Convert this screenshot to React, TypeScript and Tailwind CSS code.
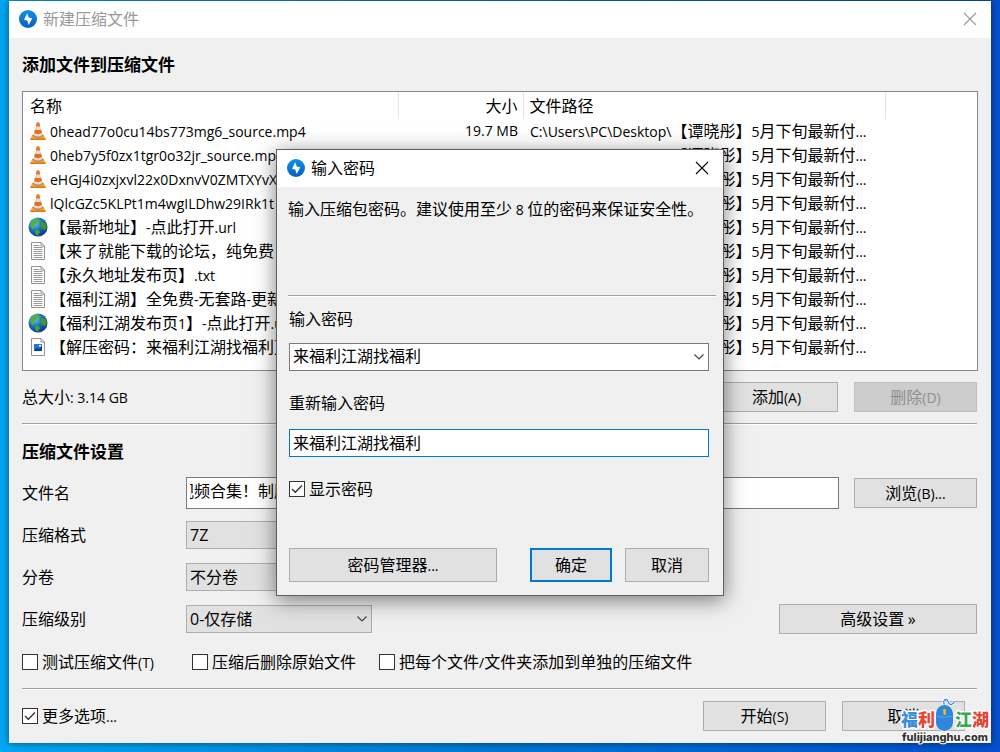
import { useState, type ReactNode } from "react";

type FileKind = "video" | "url" | "text" | "image";

interface FileItem {
  kind: FileKind;
  name: string;
  size?: string;
}

const files: FileItem[] = [
  { kind: "video", name: "0head77o0cu14bs773mg6_source.mp4", size: "19.7 MB" },
  { kind: "video", name: "0heb7y5f0zx1tgr0o32jr_source.mp4" },
  { kind: "video", name: "eHGJ4i0zxjxvl22x0DxnvV0ZMTXYvX" },
  { kind: "video", name: "lQlcGZc5KLPt1m4wgILDhw29IRk1t" },
  { kind: "url", name: "【最新地址】-点此打开.url" },
  { kind: "text", name: "【来了就能下载的论坛，纯免费" },
  { kind: "text", name: "【永久地址发布页】.txt" },
  { kind: "text", name: "【福利江湖】全免费-无套路-更新" },
  { kind: "url", name: "【福利江湖发布页1】-点此打开.url" },
  { kind: "image", name: "【解压密码：来福利江湖找福利】" },
];

const filePath = "C:\\Users\\PC\\Desktop\\【谭晓彤】5月下旬最新付...";

// Latin runs are set smaller so they sit well next to the Chinese glyphs
function Mixed({ text }: { text: string }) {
  return (
    <>
      {text.split(/([\x20-\x7e]+)/).map((part, i) =>
        i % 2 === 1 ? (
          <span key={i} className="text-[14px] leading-none">{part}</span>
        ) : (
          part
        )
      )}
    </>
  );
}

function AppLogo() {
  return (
    <svg width="18" height="18" viewBox="0 0 18 18" className="shrink-0">
      <defs>
        <linearGradient id="logo" x1="0" y1="0" x2="0" y2="1">
          <stop offset="0" stopColor="#0f93e6" />
          <stop offset="1" stopColor="#0a5cc4" />
        </linearGradient>
      </defs>
      <circle cx="9" cy="9" r="9" fill="url(#logo)" />
      <path d="M8.2 3.2 L5 9.8 L8.3 10.4 L9.6 15 L13.3 8.2 L9.8 7.6 Z" fill="#fff" />
    </svg>
  );
}

function CloseIcon() {
  return (
    <svg width="14" height="14" viewBox="0 0 14 14" fill="none" stroke="currentColor" strokeWidth="1.1">
      <path d="M1 1 L13 13 M13 1 L1 13" />
    </svg>
  );
}

function FileIcon({ kind }: { kind: FileKind }) {
  if (kind === "video") {
    return (
      <svg width="16" height="18" viewBox="0 0 16 18" className="mx-auto">
        <path d="M2.2 12.4 H13.8 L15.8 18 H0.2 Z" fill="#f7a03c" />
        <path d="M0.6 16.6 H15.4 L15.9 18 H0.1 Z" fill="#e8730c" />
        <path d="M6.8 0.6 Q8 -0.2 9.2 0.6 L12.6 13.4 Q8 16.4 3.4 13.4 Z" fill="#dcd8d5" />
        <path d="M6.8 0.6 Q8 -0.2 9.2 0.6 L10.2 4.2 Q8 5 5.8 4.2 Z" fill="#e9741a" />
        <path d="M5 7.4 Q8 8.8 11 7.4 L12 11 Q8 13 4 11 Z" fill="#e66f14" />
        <path d="M3.2 13.4 Q8 17 12.8 13.4" stroke="#8d7a6a" strokeWidth="0.9" fill="none" />
      </svg>
    );
  }
  if (kind === "url") {
    return (
      <svg width="20" height="20" viewBox="0 0 20 20" className="mx-auto">
        <defs>
          <radialGradient id="globe" cx="0.35" cy="0.3" r="0.75">
            <stop offset="0" stopColor="#7cc4f5" />
            <stop offset="0.45" stopColor="#2273cf" />
            <stop offset="1" stopColor="#0a2f86" />
          </radialGradient>
        </defs>
        <circle cx="10" cy="10" r="9.5" fill="url(#globe)" />
        <path d="M3 4.5 Q6 0.8 10.5 1 L11.5 3 L9 5 L8.4 7.5 L6 8 L7 10.5 L5 12.5 L2.2 9.5 Z" fill="#4bb53b" />
        <path d="M12.6 4 Q16 3.4 18 6.8 L19 10.5 L16.8 13.5 L14.4 12 L12 9.6 L12.4 6.5 Z" fill="#35992f" />
        <path d="M6.8 13 L10 12.6 L12 15 L10 18.6 L7.6 17.6 Z" fill="#3da635" />
      </svg>
    );
  }
  return (
    <svg width="14" height="18" viewBox="0 0 14 18" fill="none" className="mx-auto">
      <path d="M0.5 0.5 H10 L13.5 4 V17.5 H0.5 Z" fill="#fdfdfd" stroke="#929292" />
      <path d="M10 0.5 V4 H13.5" stroke="#929292" />
      {kind === "text" ? (
        <path d="M2.5 3.5 H8.5 M2.5 5.5 H11.5 M2.5 7.5 H11.5 M2.5 9.5 H11.5 M2.5 11.5 H11.5 M2.5 13.5 H11.5 M2.5 15.5 H11.5" stroke="#9c9c9c" />
      ) : (
        <>
          <rect x="3" y="6" width="8" height="7" fill="#1f7bd8" />
          <path d="M3 13 L6 9.5 L8 11 L11 8.5 V13 Z" fill="#0b3f8c" />
          <circle cx="9" cy="7.8" r="1" fill="#fff" />
        </>
      )}
    </svg>
  );
}

function Button({ children, className = "" }: { children: string; className?: string }) {
  return (
    <button type="button" className={`border text-center ${className}`}>
      <Mixed text={children} />
    </button>
  );
}

function Checkbox({ label, defaultChecked = false }: { label: string; defaultChecked?: boolean }) {
  return (
    <label className="flex items-center gap-1 whitespace-nowrap">
      <span className="grid shrink-0">
        <input
          type="checkbox"
          defaultChecked={defaultChecked}
          className="peer col-start-1 row-start-1 size-4 appearance-none border border-[#333] bg-white"
        />
        <svg
          viewBox="0 0 16 16"
          className="pointer-events-none invisible col-start-1 row-start-1 size-4 peer-checked:visible"
          fill="none"
          stroke="#333"
          strokeWidth="1.4"
        >
          <path d="M3 8 L6.3 11.3 L13 4.6" />
        </svg>
      </span>
      <span><Mixed text={label} /></span>
    </label>
  );
}

function Select({ id, options, className }: { id: string; options: string[]; className: string }) {
  return (
    <div className="grid items-center">
      <select id={id} className={`col-start-1 row-start-1 h-7 w-full appearance-none border pl-[3px] pr-6 ${className}`}>
        {options.map((option) => (
          <option key={option}>{option}</option>
        ))}
      </select>
      <svg width="10" height="6" viewBox="0 0 10 6" fill="none" stroke="#444" strokeWidth="1.2" className="pointer-events-none col-start-1 row-start-1 mr-[5px] justify-self-end">
        <path d="M0.5 0.5 L5 5 L9.5 0.5" />
      </svg>
    </div>
  );
}

function Divider({ className = "" }: { className?: string }) {
  return <hr className={`h-[2px] border-t border-b border-t-[#a0a0a0] border-b-white ${className}`} />;
}

function Field({ id, label, children }: { id: string; label: string; children: ReactNode }) {
  return (
    <div className="flex h-8 items-center">
      <label htmlFor={id} className="w-[164px] shrink-0">{label}</label>
      {children}
    </div>
  );
}

const grayButton = "border-[#adadad] bg-[#e1e1e1]";

function FileTable() {
  return (
    <div className="mt-[14px] -mr-px h-[280px] overflow-hidden border border-[#828790] bg-white">
      <table className="w-full table-fixed border-collapse whitespace-nowrap">
        <colgroup>
          <col className="w-[375px]" />
          <col className="w-[125px]" />
          <col className="w-[362px]" />
          <col />
        </colgroup>
        <thead>
          <tr className="h-[27px]">
            <th className="border-r border-[#e5e5e5] pl-[7px] text-left font-normal">名称</th>
            <th className="border-r border-[#e5e5e5] pr-[5px] text-right font-normal">大小</th>
            <th className="border-r border-[#e5e5e5] pl-[6px] text-left font-normal">文件路径</th>
            <th />
          </tr>
        </thead>
        <tbody>
          {files.map((file) => (
            <tr key={file.name} className="h-6">
              <td className="overflow-hidden p-0">
                <div className="flex items-center gap-[2px] pl-1">
                  <span className="w-[21px] shrink-0"><FileIcon kind={file.kind} /></span>
                  <span><Mixed text={file.name} /></span>
                </div>
              </td>
              <td className="p-0 pr-[5px] text-right text-[14px]">{file.size}</td>
              <td className="p-0 pl-[7px]"><Mixed text={filePath} /></td>
              <td />
            </tr>
          ))}
        </tbody>
      </table>
    </div>
  );
}

function PasswordDialog() {
  const [password, setPassword] = useState("来福利江湖找福利");

  return (
    <div
      role="dialog"
      aria-labelledby="dialog-title"
      className="absolute inset-x-0 top-[149px] mx-auto w-[448px] border border-[#5f6062] bg-[#f0f0f0] shadow-[0_4px_20px_rgba(0,0,0,0.5)]"
    >
      <div className="flex h-[37px] items-center gap-[6px] bg-white pr-[14px] pb-[2px] pl-[10px]">
        <AppLogo />
        <h2 id="dialog-title" className="flex-1">输入密码</h2>
        <button type="button" aria-label="关闭"><CloseIcon /></button>
      </div>
      <p className="mt-[10px] h-[98px] pl-[11px] whitespace-nowrap">
        <Mixed text="输入压缩包密码。建议使用至少 8 位的密码来保证安全性。" />
      </p>
      <Divider className="mr-[7px] ml-[11px]" />
      <div className="px-[12px] pr-[14px]">
        <label htmlFor="password" className="mt-[10px] mb-[12px] block">输入密码</label>
        <Select id="password" options={["来福利江湖找福利"]} className="border-[#7a7a7a] bg-white pb-[2px]" />
        <label htmlFor="password-again" className="mt-[20px] mb-[14px] block">重新输入密码</label>
        <input
          id="password-again"
          type="text"
          value={password}
          onChange={(e) => setPassword(e.target.value)}
          className="block h-7 w-full border border-[#0078d7] bg-white px-[3px] pb-[2px] outline-none"
        />
        <div className="mt-5">
          <Checkbox label="显示密码" defaultChecked />
        </div>
        <div className="mt-[47px] mb-[13px] flex">
          <Button className={`h-[34px] w-[208px] ${grayButton}`}>密码管理器...</Button>
          <Button className="mr-[13px] ml-auto h-[34px] w-[82px] border-2 border-[#0078d7] bg-[#e1e1e1]">确定</Button>
          <Button className={`h-[34px] w-[84px] ${grayButton}`}>取消</Button>
        </div>
      </div>
    </div>
  );
}

function Watermark() {
  return (
    <div className="pointer-events-none absolute right-[11px] bottom-[9px] flex flex-col items-center">
      <div className="flex items-end text-[17px] leading-6 font-black [-webkit-text-stroke:3px_white] [paint-order:stroke_fill]">
        <span className="text-[#3b8de0]">福</span>
        <span className="text-[#ea4335]">利</span>
        <svg width="20" height="34" viewBox="0 0 20 34" fill="none">
          <path d="M9.5 8 C8 3 9 1.5 11 1.5 C14 1.5 12.5 6 15.5 6.5 C17.5 6.8 18.5 5.5 19.5 3.5" stroke="#fff" strokeWidth="3" />
          <path d="M9.5 8 C8 3 9 1.5 11 1.5 C14 1.5 12.5 6 15.5 6.5 C17.5 6.8 18.5 5.5 19.5 3.5" stroke="#2f86dd" strokeWidth="1.3" />
          <rect x="1" y="7" width="17" height="26" rx="8.5" fill="#2f86dd" stroke="#fff" strokeWidth="1" />
          <path d="M1.5 18 Q9.5 21 17.5 18" stroke="#5aa3ea" strokeWidth="1" />
          <rect x="8.3" y="11" width="2.6" height="6" rx="1.3" fill="#f7b71d" stroke="none" />
        </svg>
        <span className="text-[#34a853]">江</span>
        <span className="text-[#ea4335]">湖</span>
      </div>
      <span className="text-[11px] leading-[11px] font-extrabold text-[#333] [-webkit-text-stroke:2px_white] [font-family:Inter,sans-serif] [paint-order:stroke_fill]">
        fulijianghu.com
      </span>
    </div>
  );
}

export default function App() {
  return (
    <div className="relative min-h-screen overflow-hidden bg-linear-to-r from-[#00a8f5] via-[#0078d7] to-[#0650cc] px-[9px] pt-px pb-[9px] text-base leading-6 text-black [font-family:'Open_Sans','Noto_Sans_CJK_SC',sans-serif]">
      <main className="bg-[#f0f0f0] shadow-[0_0_8px_rgba(0,0,0,0.5)]">
        <header className="flex h-[37px] items-center gap-[6px] bg-white pr-[14px] pb-[2px] pl-[10px] text-[#999]">
          <AppLogo />
          <h1 className="flex-1">新建压缩文件</h1>
          <button type="button" aria-label="关闭"><CloseIcon /></button>
        </header>

        <div className="pr-[14px] pl-[13px]">
          <h2 className="pt-[15px] text-[17px] font-bold">添加文件到压缩文件</h2>
          <FileTable />

          <div className="mt-[11px] flex h-[30px] items-center gap-4">
            <span className="flex-1"><Mixed text="总大小: 3.14 GB" /></span>
            <Button className={`h-[30px] w-[123px] ${grayButton}`}>添加(A)</Button>
            <Button className="h-[30px] w-[123px] border-[#bfbfbf] bg-[#cccccc] text-[#8f8f8f]">删除(D)</Button>
          </div>
          <Divider className="mt-[11px]" />

          <h2 className="mt-[15px] mb-[13px] text-[17px] font-bold">压缩文件设置</h2>
          <div className="flex flex-col gap-[10px]">
            <Field id="file-name" label="文件名">
              <input
                id="file-name"
                type="text"
                defaultValue="视频合集！制服"
                className="h-8 min-w-0 flex-1 border border-[#7a7a7a] bg-white px-[3px] pb-[6px] indent-[-12px]"
              />
              <Button className={`ml-[15px] h-[30px] w-[123px] ${grayButton}`}>浏览(B)...</Button>
            </Field>
            <Field id="format" label="压缩格式">
              <div className="w-[186px]">
                <Select id="format" options={["7Z"]} className={grayButton} />
              </div>
            </Field>
            <Field id="volume" label="分卷">
              <div className="w-[186px]">
                <Select id="volume" options={["不分卷"]} className={grayButton} />
              </div>
            </Field>
            <Field id="level" label="压缩级别">
              <div className="w-[186px]">
                <Select id="level" options={["0-仅存储"]} className={grayButton} />
              </div>
              <Button className={`ml-auto h-[30px] w-[198px] ${grayButton}`}>高级设置 »</Button>
            </Field>
          </div>

          <div className="mt-[15px] flex">
            <div className="w-[170px]"><Checkbox label="测试压缩文件(T)" /></div>
            <div className="w-[187px]"><Checkbox label="压缩后删除原始文件" /></div>
            <Checkbox label="把每个文件/文件夹添加到单独的压缩文件" />
          </div>
          <Divider className="mt-[14px]" />

          <div className="flex items-center gap-4 pt-[11px] pr-[12px] pb-[12px]">
            <div className="flex-1"><Checkbox label="更多选项..." defaultChecked /></div>
            <Button className={`h-[30px] w-[123px] ${grayButton}`}>开始(S)</Button>
            <Button className={`h-[30px] w-[123px] ${grayButton}`}>取消</Button>
          </div>
        </div>
      </main>

      <PasswordDialog />
      <Watermark />
    </div>
  );
}
